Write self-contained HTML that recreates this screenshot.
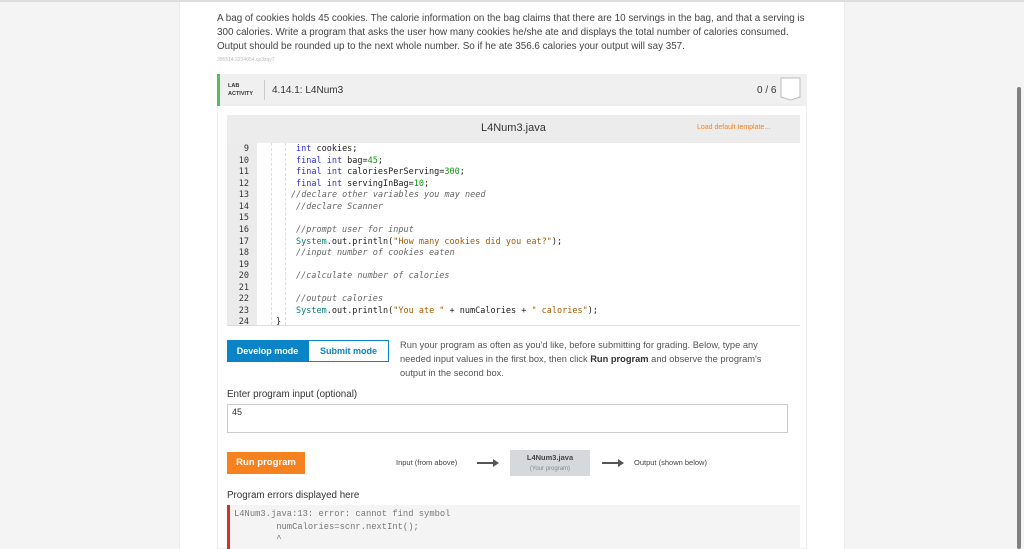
<!DOCTYPE html>
<html><head><style>
body{margin:0;width:1024px;height:549px;overflow:hidden;background:#f4f4f4;font-family:"Liberation Sans",sans-serif;position:relative}
.col{position:absolute;left:180px;top:0;width:664px;height:549px;background:#fff;box-shadow:0 0 2px #ddd}
.topsh{position:absolute;left:0;top:0;width:1024px;height:2px;background:#ddd}
.abs{position:absolute}
.desc{left:217px;top:12px;width:590px;font-size:9.85px;line-height:14px;color:#444}
.lab{left:217px;top:74px;width:590px;height:32px;background:#f0f0f0;border-left:3px solid #5cb85c;box-sizing:border-box}
.panel{left:217px;top:106px;width:590px;height:443px;border:1px solid #eee;border-top:none;box-sizing:border-box}
.code{font-family:"DejaVu Sans Mono","Liberation Mono",monospace;font-size:8.5px;line-height:11.57px;white-space:pre}
.kw{color:#2d2dd0}.st{color:#a35a00}.nm{color:#0a9a0a}.cm{color:#666;font-style:italic}.sy{color:#0a7a7a}
</style></head><body>
<div class="col"></div>
<div class="topsh"></div>
<div class="abs" style="left:1017px;top:87px;width:4px;height:462px;background:#808080;border-radius:2px"></div>
<div class="abs desc">A bag of cookies holds 45 cookies. The calorie information on the bag claims that there are 10 servings in the bag, and that a serving is 300 calories. Write a program that asks the user how many cookies he/she ate and displays the total number of calories consumed. Output should be rounded up to the next whole number. So if he ate 356.6 calories your output will say 357.</div>
<div class="abs" style="left:217px;top:57px;font-size:5px;color:#bbb">395514.2234054.qx3zqy7</div>
<div class="abs lab"></div>
<div class="abs" style="left:228px;top:82px;font-size:5.5px;font-weight:bold;color:#333;line-height:8px">LAB<br>ACTIVITY</div>
<div class="abs" style="left:264px;top:80px;width:1px;height:20px;background:#ccc"></div>
<div class="abs" style="left:272px;top:85px;font-size:10px;color:#333">4.14.1: L4Num3</div>
<div class="abs" style="left:757px;top:85px;font-size:10px;color:#333">0 / 6</div>
<svg class="abs" style="left:780px;top:77px" width="22" height="24"><path d="M1 1H20V20L10.5 23L1 20Z" fill="#fff" stroke="#bbb"/></svg>
<div class="abs panel"></div>
<div class="abs" style="left:227px;top:115px;width:573px;height:28px;background:#ececec"></div>
<div class="abs" style="left:481px;top:122px;font-size:11px;color:#333">L4Num3.java</div>
<div class="abs" style="left:697px;top:124px;font-size:7px;color:#f58220">Load default template...</div>
<div class="abs" style="left:227px;top:143px;width:573px;height:182px;background:#fff;overflow:hidden;border-bottom:1px solid #ddd">
<div class="abs" style="left:0;top:0;width:30px;height:182px;background:#ebebeb"></div>
<div class="abs code" style="left:0;top:1px;width:22px;text-align:right;color:#333">9
10
11
12
13
14
15
16
17
18
19
20
21
22
23
24</div>
<div class="abs" style="left:44px;top:0;height:182px;border-left:1px dashed #ddd"></div>
<div class="abs" style="left:58px;top:0;height:182px;border-left:1px dashed #ddd"></div>
<div class="abs code" style="left:69px;top:1px;color:#222"><span class="kw">int</span> cookies;
<span class="kw">final int</span> bag=<span class="nm">45</span>;
<span class="kw">final int</span> caloriesPerServing=<span class="nm">300</span>;
<span class="kw">final int</span> servingInBag=<span class="nm">10</span>;
<span class="cm" style="margin-left:-5px">//declare other variables you may need</span>
<span class="cm">//declare Scanner</span>

<span class="cm">//prompt user for input</span>
<span class="sy">System</span>.out.println(<span class="st">"How many cookies did you eat?"</span>);
<span class="cm">//input number of cookies eaten</span>

<span class="cm">//calculate number of calories</span>

<span class="cm">//output calories</span>
<span class="sy">System</span>.out.println(<span class="st">"You ate "</span> + numCalories + <span class="st">" calories"</span>);
<span style="margin-left:-20px">}</span></div>
</div>
<div class="abs" style="left:227px;top:340px;width:81px;height:22px;background:#0a84c6;color:#fff;font-size:9px;font-weight:bold;line-height:22px;text-align:center">Develop mode</div>
<div class="abs" style="left:308px;top:340px;width:79px;height:20px;border:1px solid #0a84c6;color:#0a84c6;font-size:9px;font-weight:bold;line-height:20px;text-align:center">Submit mode</div>
<div class="abs" style="left:400px;top:338px;width:385px;font-size:9.3px;line-height:14px;color:#555">Run your program as often as you'd like, before submitting for grading. Below, type any needed input values in the first box, then click <b style="color:#333">Run program</b> and observe the program's output in the second box.</div>
<div class="abs" style="left:227px;top:389px;font-size:9.8px;color:#333">Enter program input (optional)</div>
<div class="abs" style="left:227px;top:404px;width:561px;height:29px;border:1px solid #ccc;font-size:9px;color:#333;padding:2px 4px;box-sizing:border-box">45</div>
<div class="abs" style="left:227px;top:452px;width:78px;height:22px;background:#f5821f;color:#fff;font-size:9.5px;font-weight:bold;line-height:22px;text-align:center">Run program</div>
<div class="abs" style="left:396px;top:458px;font-size:7.5px;color:#444">Input (from above)</div>
<svg class="abs" style="left:476px;top:458px" width="24" height="10"><path d="M1 5H18" stroke="#555" stroke-width="2"/><path d="M17 1L23 5L17 9Z" fill="#555"/></svg>
<div class="abs" style="left:510px;top:450px;width:80px;height:26px;background:#d5d9dc;text-align:center;font-size:7.5px;font-weight:bold;color:#444;line-height:10px;padding-top:3px;box-sizing:border-box">L4Num3.java<br><span style="font-weight:normal;font-size:6px;color:#888">(Your program)</span></div>
<svg class="abs" style="left:601px;top:458px" width="24" height="10"><path d="M1 5H18" stroke="#555" stroke-width="2"/><path d="M17 1L23 5L17 9Z" fill="#555"/></svg>
<div class="abs" style="left:634px;top:458px;font-size:7.5px;color:#444">Output (shown below)</div>
<div class="abs" style="left:227px;top:490px;font-size:9.8px;color:#333">Program errors displayed here</div>
<div class="abs code" style="left:227px;top:505px;width:573px;height:44px;background:#f4f4f4;border-left:3px solid #d32f2f;box-sizing:border-box;padding:3px 0 0 4px;font-family:'Liberation Mono',monospace;color:#777;font-size:8.8px;line-height:12.5px">L4Num3.java:13: error: cannot find symbol
        numCalories=scnr.nextInt();
        ^</div>
</body></html>
